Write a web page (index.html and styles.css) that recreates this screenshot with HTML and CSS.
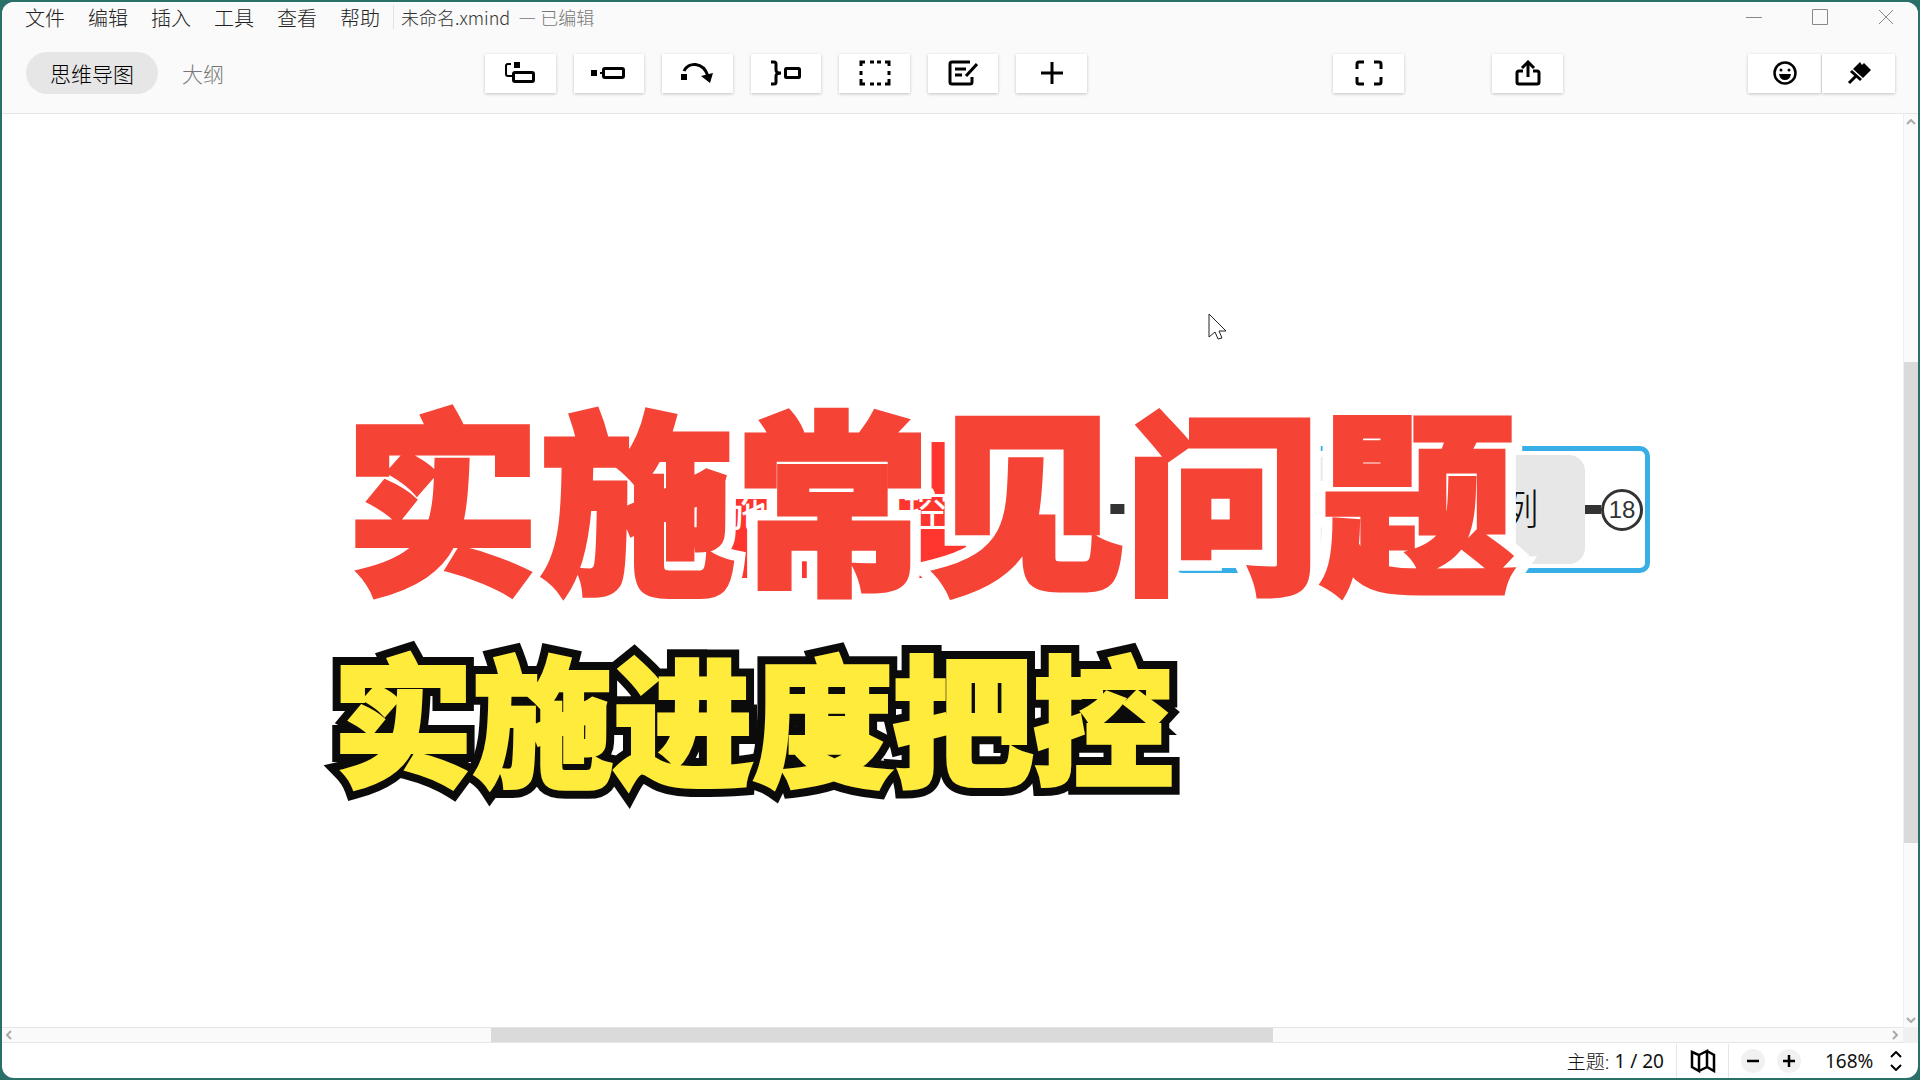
FILE: index.html
```html
<!DOCTYPE html>
<html lang="zh-CN">
<head>
<meta charset="utf-8">
<meta name="viewport" content="width=device-width, initial-scale=1">
<title>未命名.xmind</title>
<link rel="stylesheet" href="styles.css">
</head>
<body>
<div class="window">
  <header class="titlebar">
    <nav class="menu">
      <a href="#">文件</a><a href="#">编辑</a><a href="#">插入</a><a href="#">工具</a><a href="#">查看</a><a href="#">帮助</a>
    </nav>
    <div class="doc"><span class="doc-name">未命名.xmind</span><span class="doc-state">— 已编辑</span></div>
    <div class="win-controls">
      <button aria-label="最小化"><svg width="16" height="16"><path d="M0 8.5H16"/></svg></button>
      <button aria-label="最大化"><svg width="16" height="16"><path d="M.5 .5H15.500V15.500H.5Z"/></svg></button>
      <button aria-label="关闭"><svg width="16" height="16"><path d="M1 1L15 15M15 1L1 15"/></svg></button>
    </div>
  </header>

  <div class="toolbar">
    <div class="tabs">
      <button class="tab tab-active">思维导图</button>
      <button class="tab">大纲</button>
    </div>
    <div class="tools">
      <button class="tool" aria-label="主题"><svg width="32" height="24"><path d="M7 3H4Q2 3 2 5V13Q2 15 4 15H8" stroke-width="2"/><rect x="10" y="1" width="6" height="6" class="solid"/><rect x="9.500" y="11.500" width="20" height="9" rx="1.500" stroke-width="3"/></svg></button>
      <button class="tool" aria-label="子主题"><svg width="36" height="24"><rect x="0" y="9" width="6" height="6" class="solid"/><path d="M9 12H13" stroke-width="2"/><rect x="12.500" y="7.500" width="20" height="9" rx="1.500" stroke-width="3"/></svg></button>
      <button class="tool" aria-label="联系"><svg width="36" height="24"><rect x="2" y="13" width="6" height="6" class="solid"/><path d="M5 10C9 1 24 0 29 15" stroke-width="3"/><path d="M22 15L34 12L31 22Z" class="solid"/></svg></button>
      <button class="tool" aria-label="概要"><svg width="34" height="26"><path d="M2 2H5Q7 2 7 4V10Q7 13 12 13Q7 13 7 16V22Q7 24 5 24H2" stroke-width="3"/><rect x="16.500" y="8.500" width="14" height="9" rx="1" stroke-width="3"/></svg></button>
      <button class="tool" aria-label="外框"><svg width="32" height="26"><path d="M2 6V2H6M11 2H15M18 2H22M26 2H30V6M30 11V15M30 19V24H26M22 24H18M15 24H11M6 24H2V19M2 15V11" stroke-width="3"/></svg></button>
      <button class="tool" aria-label="笔记"><svg width="30" height="26"><path d="M22 2H4Q2 2 2 4V22Q2 24 4 24H22Q24 24 24 22V17" stroke-width="3"/><path d="M7 9H18M7 15H14M18 16L29 4" stroke-width="3"/></svg></button>
      <button class="tool" aria-label="插入"><svg width="24" height="24"><path d="M12 1V23M1 12H23" stroke-width="3"/></svg></button>
    </div>
    <button class="tool zen" aria-label="ZEN 模式"><svg width="28" height="26"><path d="M2 9V4Q2 2 4 2H9M19 2H24Q26 2 26 4V9M26 17V22Q26 24 24 24H19M9 24H4Q2 24 2 22V17" stroke-width="3"/></svg></button>
    <button class="tool share" aria-label="分享"><svg width="26" height="26"><path d="M8 11H4Q2 11 2 13V22Q2 24 4 24H22Q24 24 24 22V13Q24 11 22 11H18" stroke-width="3"/><path d="M13 17V3M7 8L13 2L19 8" stroke-width="3"/></svg></button>
    <div class="panels">
      <button class="tool" aria-label="图标"><svg width="26" height="26"><circle cx="13" cy="13" r="10.500" stroke-width="2.500"/><circle cx="9" cy="10" r="1.500" class="solid"/><circle cx="17" cy="10" r="1.500" class="solid"/><path d="M7 14H19Q18 20 13 20Q8 20 7 14Z" class="solid"/></svg></button>
      <button class="tool" aria-label="格式"><svg width="26" height="26"><path d="M7 9L14 2L16 5L18 3L25 10L17 18Z" class="solid"/><path d="M5 11L15 20M10 16L3 23" stroke-width="3"/></svg></button>
    </div>
  </div>

  <main class="workspace">
    <div class="canvas">
      <div class="topic central">实施进度把控</div>
      <div class="branch"></div>
      <div class="selection">
        <div class="topic sub">案例</div>
        <div class="link"></div>
        <button class="count">18</button>
      </div>
      <h1 class="headline headline-red" data-text="实施常见问题">实施常见问题</h1>
      <h2 class="headline headline-yellow" data-text="实施进度把控">实施进度把控</h2>
      <svg class="cursor" width="20" height="30" viewBox="0 0 20 30"><path d="M1 1V24L7 19L10 26L14 25L11 18H18Z"/></svg>
    </div>
    <div class="vbar">
      <svg width="10" height="6"><path d="M1 5L5 1L9 5"/></svg>
      <div class="vtrack"><div class="vthumb"></div></div>
      <svg width="10" height="6"><path d="M1 1L5 5L9 1"/></svg>
    </div>
    <div class="hbar">
      <svg width="6" height="10"><path d="M5 1L1 5L5 9"/></svg>
      <div class="htrack"><div class="hthumb"></div></div>
      <svg width="6" height="10"><path d="M1 1L5 5L1 9"/></svg>
    </div>
    <div class="corner"></div>
  </main>

  <footer class="status">
    <div class="topics"><span class="topics-label">主题:</span> 1 / 20</div>
    <button class="map" aria-label="导航图"><svg width="26" height="24"><path d="M2 3L9 6V22L2 18ZM9 6L17 2V18L9 22M17 2L24 6V22L17 18" stroke-width="2.500"/></svg></button>
    <div class="zoom">
      <button class="round" aria-label="缩小"><svg width="12" height="12"><path d="M0 6H12" stroke-width="2.500"/></svg></button>
      <button class="round" aria-label="放大"><svg width="12" height="12"><path d="M0 6H12M6 0V12" stroke-width="2.500"/></svg></button>
      <span class="percent">168%</span>
      <button class="step" aria-label="缩放比例"><svg width="12" height="20"><path d="M1 6L6 1L11 6M1 14L6 19L11 14" stroke-width="2"/></svg></button>
    </div>
  </footer>
</div>
</body>
</html>
```
FILE: styles.css
```css
* { box-sizing: border-box; }
body {
  margin: 0;
  height: 100vh;
  padding: 2px;
  background: #2b6f69;
  font-family: "Noto Sans", "Noto Sans CJK SC", sans-serif;
  color: #111;
}
button {
  border: 0;
  padding: 0;
  background: none;
  font: inherit;
  color: inherit;
  display: flex;
  align-items: center;
  justify-content: center;
}
a { color: inherit; text-decoration: none; }
svg { display: block; fill: none; stroke: #000; }
.solid { fill: #000; stroke: none; }

.window {
  height: 100%;
  display: flex;
  flex-direction: column;
  border-radius: 12px;
  overflow: hidden;
  background: #fff;
}

.titlebar {
  display: flex;
  align-items: center;
  height: 30px;
  padding: 0 14px 0 23px;
  background: #fafafa;
  font-family: "Noto Sans CJK SC", sans-serif;
  font-weight: 300;
}
.menu { display: flex; gap: 23px; font-size: 20px; color: #222; }
.doc {
  display: flex;
  gap: 8px;
  margin-left: 13px;
  padding-left: 7px;
  border-left: 1px solid #e4e4e4;
  font-size: 18px;
  line-height: 24px;
  color: #333;
}
.doc-state { color: #777; }
.win-controls { display: flex; gap: 50px; margin-left: auto; padding-right: 10px; }
.win-controls svg { stroke: #888; }

.toolbar {
  display: flex;
  align-items: center;
  height: 82px;
  padding: 1px 23px 0 24px;
  background: #fafafa;
  border-bottom: 1px solid #e6e6e6;
}
.tabs { display: flex; flex: 0 0 459px; gap: 2px; }
.tab {
  height: 42px;
  padding: 0 22px;
  border-radius: 21px;
  font-family: "Noto Sans CJK SC", sans-serif;
  font-size: 21px;
  font-weight: 300;
  color: #777;
}
.tab-active { padding: 0 24px; background: #e6e6e6; color: #000; }
.tools { display: grid; grid-template-columns: repeat(7, 1fr); gap: 18px; width: 602px; }
.tool { height: 39px; background: #fff; box-shadow: 0 1px 3px rgba(0, 0, 0, .22); }
.zen, .share { width: 71px; }
.zen { margin-left: auto; }
.share { margin-left: 88px; }
.panels { display: grid; grid-template-columns: 1fr 1fr; gap: 1px; width: 147px; margin-left: 185px; }

.workspace {
  flex: 1;
  min-height: 0;
  display: grid;
  grid-template-columns: 1fr 15px;
  grid-template-rows: 1fr 16px;
}
.canvas { position: relative; overflow: hidden; isolation: isolate; }
.vbar, .hbar { display: flex; align-items: center; background: #fafafa; }
.vbar { flex-direction: column; padding: 5px 0 4px; gap: 10px; border-left: 1px solid #eee; }
.hbar { padding: 0 5px 0 4px; gap: 10px; border-top: 1px solid #e6e6e6; border-bottom: 1px solid #e6e6e6; }
.vbar svg, .hbar svg { flex: none; stroke: #aaa; stroke-width: 2; }
.vtrack { flex: 1; width: 100%; padding-top: 227px; }
.htrack { flex: 1; height: 100%; padding-left: 469px; }
.vthumb { height: 74.6%; background: #dadada; }
.hthumb { height: 100%; width: 56.2%; background: #dadada; }
.corner { background: #f0f0f0; }

.topic, .branch, .selection, .headline, .cursor { position: absolute; }
.central {
  left: 658px;
  top: 328px;
  width: 306px;
  height: 136px;
  background: #ff3530;
  color: #fff;
  font-size: 45px;
  line-height: 136px;
  text-align: center;
  white-space: nowrap;
}
.branch { left: 1107px; top: 390px; width: 60px; height: 10px; background: #333; }
.selection {
  left: 1170px;
  top: 332px;
  width: 478px;
  height: 127px;
  display: flex;
  align-items: center;
  justify-content: flex-end;
  padding-right: 2px;
  border: 5px solid #38aee6;
  border-radius: 10px;
}
.sub {
  position: static;
  width: 272px;
  height: 109px;
  padding-right: 46px;
  border-radius: 16px;
  background: #e7e7e7;
  font-family: "Noto Sans CJK SC", sans-serif;
  font-size: 42px;
  font-weight: 300;
  line-height: 104px;
  text-align: right;
}
.link { width: 16px; height: 9px; background: #333; }
.count {
  width: 42px;
  height: 42px;
  border: 3px solid #333;
  border-radius: 50%;
  font-family: "Liberation Sans", sans-serif;
  font-size: 24px;
  color: #333;
}

.headline {
  z-index: 1;
  margin: 0;
  font-family: "Noto Sans CJK SC", sans-serif;
  font-weight: 900;
  line-height: 1;
  white-space: nowrap;
}
.headline::before { content: attr(data-text); position: absolute; left: 0; top: 0; z-index: -1; }
.headline-red { left: 343px; top: 282px; font-size: 195px; color: #f54336; -webkit-text-stroke: 5px #f54336; }
.headline-red::before { color: #fff; -webkit-text-stroke: 26px #fff; }
.headline-yellow { left: 331px; top: 530px; font-size: 140px; color: #ffeb3b; -webkit-text-stroke: 4px #ffeb3b; }
.headline-yellow::before { color: #0b0b0b; -webkit-text-stroke: 20px #0b0b0b; }
.cursor { left: 1206px; top: 199px; z-index: 2; }
.cursor path { fill: #fff; stroke: #222; stroke-width: 1; }

.status { display: flex; align-items: stretch; height: 35px; padding-top: 1px; font-size: 19px; }
.topics {
  display: flex;
  align-items: center;
  gap: 5px;
  margin-left: auto;
  padding-right: 12px;
  border-right: 1px solid #e6e6e6;
}
.topics-label { font-weight: 300; }
.map { width: 52px; border-right: 1px solid #e6e6e6; }
.zoom { display: flex; align-items: center; width: 189px; padding-left: 12px; }
.round { width: 24px; height: 24px; border-radius: 50%; background: #f1f1f1; }
.round + .round { margin-left: 12px; }
.percent { margin-left: 24px; }
.step { margin-left: auto; margin-right: 16px; }
```
